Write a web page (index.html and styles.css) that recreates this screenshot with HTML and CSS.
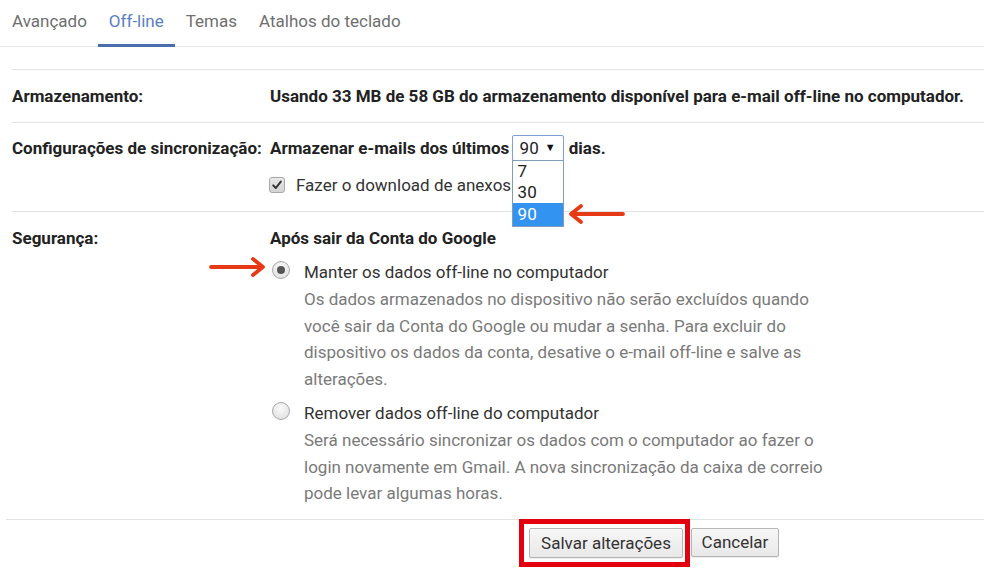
FILE: index.html
```html
<!DOCTYPE html>
<html lang="pt">
<head>
<meta charset="utf-8">
<title>Off-line</title>
<link rel="stylesheet" href="styles.css">
</head>
<body>
<nav class="tabs">
  <span class="tab">Avançado</span>
  <span class="tab active">Off-line</span>
  <span class="tab">Temas</span>
  <span class="tab">Atalhos do teclado</span>
</nav>
<main class="content">
  <section class="row row-storage">
    <div class="label">Armazenamento:</div>
    <div class="value strong">Usando 33 MB de 58 GB do armazenamento disponível para e-mail off-line no computador.</div>
  </section>
  <section class="row row-sync">
    <div class="label">Configurações de sincronização:</div>
    <div class="value">
      <div class="line strong">Armazenar e-mails dos últimos
        <span class="select-wrap">
          <span class="select">90<span class="caret">▼</span></span>
          <span class="dropdown">
            <span class="opt">7</span>
            <span class="opt">30</span>
            <span class="opt selected">90</span>
            <svg class="arrow arrow-left" width="60" height="22" viewBox="0 0 60 22"><path d="M57 11 H5 M15 3 L5 11 L15 19" fill="none" stroke="#e63a17" stroke-width="3.8" stroke-linecap="round" stroke-linejoin="round"/></svg>
          </span>
        </span> dias.</div>
      <div class="line check-line"><span class="checkbox"><svg width="12" height="12" viewBox="0 0 12 12"><path d="M2.2 6.4 L4.8 9 L9.8 2.6" fill="none" stroke="#333" stroke-width="2" stroke-linecap="round" stroke-linejoin="round"/></svg></span>Fazer o download de anexos</div>
    </div>
  </section>
  <section class="row row-security">
    <div class="label">Segurança:</div>
    <div class="value">
      <div class="line strong heading">Após sair da Conta do Google</div>
      <div class="option">
        <svg class="arrow arrow-right" width="60" height="22" viewBox="0 0 60 22"><path d="M3 11 H55 M45 3 L55 11 L45 19" fill="none" stroke="#e63a17" stroke-width="3.8" stroke-linecap="round" stroke-linejoin="round"/></svg>
        <span class="radio checked"></span>
        <div class="option-text">
          <div class="opt-title">Manter os dados off-line no computador</div>
          <div class="opt-desc">Os dados armazenados no dispositivo não serão excluídos quando<br>você sair da Conta do Google ou mudar a senha. Para excluir do<br>dispositivo os dados da conta, desative o e-mail off-line e salve as<br>alterações.</div>
        </div>
      </div>
      <div class="option">
        <span class="radio"></span>
        <div class="option-text">
          <div class="opt-title">Remover dados off-line do computador</div>
          <div class="opt-desc">Será necessário sincronizar os dados com o computador ao fazer o<br>login novamente em Gmail. A nova sincronização da caixa de correio<br>pode levar algumas horas.</div>
        </div>
      </div>
    </div>
  </section>
  <section class="actions">
    <div class="highlight"><button class="btn">Salvar alterações</button></div>
    <button class="btn btn-cancel">Cancelar</button>
  </section>
</main>
</body>
</html>
```
FILE: styles.css
```css
html, body {
  margin: 0;
  padding: 0;
  background: #fff;
}
body {
  font-family: Roboto, "Liberation Sans", Arial, sans-serif;
  font-size: 17px;
  color: #222;
  width: 984px;
  height: 569px;
  overflow: hidden;
}
.tabs {
  display: flex;
  height: 47px;
  padding-left: 1px;
  box-shadow: inset 0 -1px 0 #e6e6e6;
  box-sizing: border-box;
}
.tab {
  display: block;
  padding: 11px 11px 0;
  height: 47px;
  box-sizing: border-box;
  border-bottom: 3px solid transparent;
  font-size: 17px;
  line-height: 20px;
  color: #6f6f6f;
}
.tab.active {
  color: #5a80c4;
  border-bottom-color: #4b6eaa;
}
.content {
  margin-top: 22px;
}
.row {
  display: flex;
  margin-left: 12px;
  border-top: 1px solid #e3e3e3;
  line-height: 26px;
}
.label {
  width: 258px;
  flex: none;
  font-weight: 700;
  color: #222;
}
.value {
  flex: 1;
}
.strong {
  font-weight: 700;
  color: #222;
}
.row-storage {
  padding: 13px 0 13px;
}
.row-sync {
  padding: 12px 0 13px;
}
.check-line {
  margin-top: 11px;
  display: flex;
  align-items: center;
  color: #333;
}
.checkbox {
  border: 1px solid #a8a8a8;
  border-radius: 3px;
  background: linear-gradient(#e8e8e8, #d4d4d4);
  margin-right: 11px;
  display: flex;
  align-items: center;
  justify-content: center;
  box-sizing: border-box;
  width: 16px;
  height: 16px;
  margin-left: -1px;
}
.select-wrap {
  position: relative;
  display: inline-block;
  vertical-align: top;
  margin: 0 1px 0 -2px;
}
.select {
  display: inline-flex;
  align-items: center;
  width: 52px;
  height: 26px;
  box-sizing: border-box;
  border: 1px solid #7d9fd6;
  border-radius: 2px;
  padding-left: 7px;
  font-weight: 400;
  color: #222;
  font-size: 17px;
  background: #fff;
}
.caret {
  font-size: 11px;
  margin-left: 6px;
  color: #111;
}
.dropdown {
  position: absolute;
  left: 0;
  top: 25px;
  width: 52px;
  box-sizing: border-box;
  border: 1px solid #7f9db9;
  background: #fff;
  display: flex;
  flex-direction: column;
  z-index: 2;
}
.opt {
  display: block;
  height: 21px;
  line-height: 21px;
  padding-left: 5px;
  font-weight: 400;
  color: #222;
  font-size: 17px;
}
.opt.selected {
  background: #3393f0;
  color: #fff;
  height: 23px;
  line-height: 23px;
}
.arrow {
  position: absolute;
}
.arrow-left {
  left: 53px;
  top: 42px;
}
.row-security {
  padding: 13px 0 12px;
}
.heading {
  margin-bottom: 8px;
}
.option {
  position: relative;
  display: flex;
  margin-bottom: 8px;
}
.option:last-child {
  margin-bottom: 0;
}
.arrow-right {
  left: -62px;
  top: -3px;
}
.radio {
  flex: none;
  width: 18px;
  height: 18px;
  box-sizing: border-box;
  border-radius: 50%;
  border: 1px solid #a9a9a9;
  background: radial-gradient(circle at 50% 35%, #fafafa, #dcdcdc);
  margin: 2px 14px 0 2px;
  display: flex;
  align-items: center;
  justify-content: center;
}
.radio.checked::after {
  content: "";
  width: 8px;
  height: 8px;
  border-radius: 50%;
  background: #555;
}
.opt-title {
  color: #333;
  line-height: 27px;
}
.opt-desc {
  color: #7a7a7a;
  line-height: 26.5px;
}
.actions {
  display: flex;
  align-items: flex-start;
  margin-left: 6px;
  border-top: 1px solid #e3e3e3;
  padding-left: 513px;
  height: 48px;
}
.highlight {
  border: 5px solid #e3000f;
  padding: 4px 2px 4px 5px;
  margin-top: -1px;
  margin-right: 1px;
  display: flex;
}
.btn {
  font-family: Roboto, "Liberation Sans", Arial, sans-serif;
  font-size: 17px;
  color: #333;
  height: 30px;
  padding: 0 8px;
  border: 1px solid #b5b5b5;
  border-radius: 2px;
  background: linear-gradient(#f7f7f7, #e8e8e8);
  box-shadow: 0 1px 1px rgba(0,0,0,0.08);
  width: 154px;
}
.btn-cancel {
  width: 88px;
  height: 29px;
  margin-top: 8px;
}
```
